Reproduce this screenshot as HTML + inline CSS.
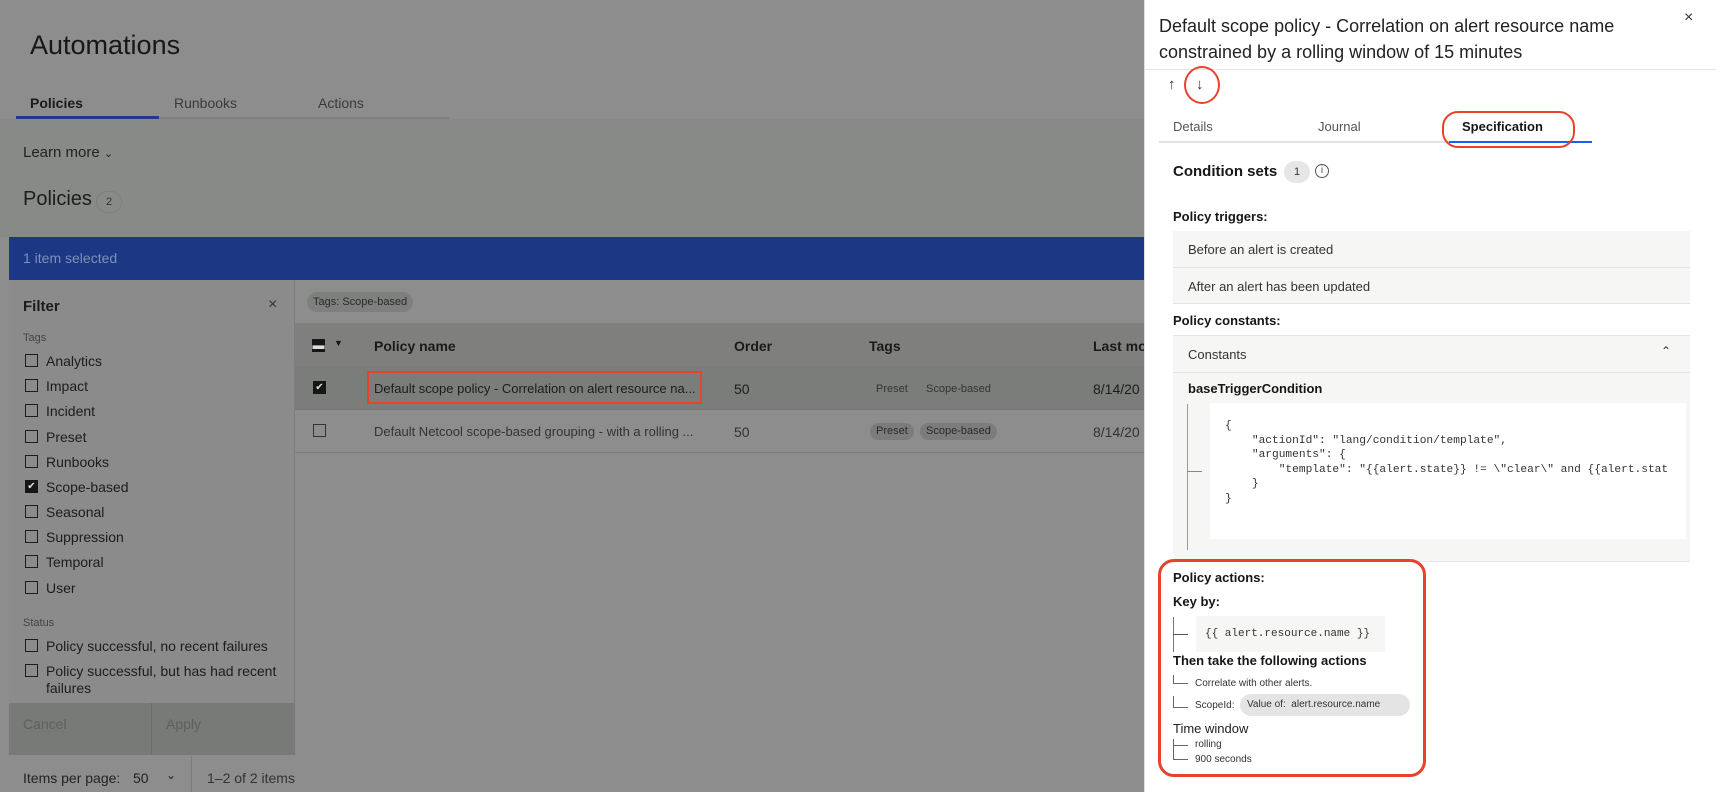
<!DOCTYPE html>
<html><head><meta charset="utf-8"><style>
*{margin:0;padding:0;box-sizing:border-box}
body{width:1716px;height:792px;overflow:hidden;position:relative;background:#8d8d8d;font-family:"Liberation Sans",sans-serif;color:#161616}
.a{position:absolute;white-space:nowrap}
.cb{position:absolute;width:13px;height:13px;border:1px solid #1c1c1c}
.cbk{position:absolute;width:13px;height:13px;background:#161616;color:#ddd;font-size:10px;line-height:13px;text-align:center}
.lbl{font-size:14px;color:#1c1c1c}
.chip{position:absolute;height:17px;border-radius:9px;background:#7b7c7b;font-size:11px;line-height:17px;padding:0 6px;color:#2a2a2a}
.d{color:#161616}
.box{position:absolute;background:#f6f7f5}
.mono{font-family:"Liberation Mono",monospace}
</style></head><body>
<div class="a" style="left:30px;top:30px;font-size:27px;color:#171717">Automations</div>
<div class="a" style="left:30px;top:95px;font-size:14px;font-weight:bold;color:#1a1a1a">Policies</div>
<div class="a" style="left:174px;top:95px;font-size:14px;color:#3a3a3a">Runbooks</div>
<div class="a" style="left:318px;top:95px;font-size:14px;color:#3a3a3a">Actions</div>
<div class="a" style="left:16px;top:117px;width:433px;height:2px;background:#7e807e"></div>
<div class="a" style="left:16px;top:116px;width:143px;height:3px;background:#1f3a8a"></div>
<div class="a" style="left:0;top:119px;width:1144px;height:118px;background:#888a87"></div>
<div class="a" style="left:23px;top:144px;font-size:15px;color:#222">Learn more <span style="font-size:11px">&#8964;</span></div>
<div class="a" style="left:23px;top:188px;font-size:20px;color:#1d1d1d">Policies</div>
<div class="a" style="left:96px;top:191px;width:26px;height:22px;border-radius:11px;border:1px solid #7d7f7d;font-size:11px;line-height:20px;text-align:center;color:#333">2</div>
<div class="a" style="left:9px;top:237px;width:1135px;height:43px;background:#1c3784;color:#7f8fb5;font-size:14px;line-height:43px;padding-left:14px">1 item selected</div>
<div class="a" style="left:9px;top:280px;width:286px;height:423px;background:#8b8b8b;border-right:1px solid #7e7e7e"></div>
<div class="a" style="left:23px;top:298px;font-size:15px;font-weight:bold;color:#1c1c1c">Filter</div>
<div class="a" style="left:268px;top:296px;font-size:16px;color:#333">×</div>
<div class="a" style="left:23px;top:332px;font-size:11px;color:#444">Tags</div>
<div class="cb" style="left:25px;top:354px"></div><div class="a lbl" style="left:46px;top:353px">Analytics</div>
<div class="cb" style="left:25px;top:379px"></div><div class="a lbl" style="left:46px;top:378px">Impact</div>
<div class="cb" style="left:25px;top:404px"></div><div class="a lbl" style="left:46px;top:403px">Incident</div>
<div class="cb" style="left:25px;top:430px"></div><div class="a lbl" style="left:46px;top:429px">Preset</div>
<div class="cb" style="left:25px;top:455px"></div><div class="a lbl" style="left:46px;top:454px">Runbooks</div>
<div class="cbk" style="left:25px;top:480px">✔</div><div class="a lbl" style="left:46px;top:479px">Scope-based</div>
<div class="cb" style="left:25px;top:505px"></div><div class="a lbl" style="left:46px;top:504px">Seasonal</div>
<div class="cb" style="left:25px;top:530px"></div><div class="a lbl" style="left:46px;top:529px">Suppression</div>
<div class="cb" style="left:25px;top:555px"></div><div class="a lbl" style="left:46px;top:554px">Temporal</div>
<div class="cb" style="left:25px;top:581px"></div><div class="a lbl" style="left:46px;top:580px">User</div>
<div class="a" style="left:23px;top:617px;font-size:11px;color:#444">Status</div>
<div class="cb" style="left:25px;top:639px"></div><div class="a lbl" style="left:46px;top:638px">Policy successful, no recent failures</div>
<div class="cb" style="left:25px;top:664px"></div><div class="a lbl" style="left:46px;top:663px;line-height:17px">Policy successful, but has had recent<br>failures</div>
<div class="a" style="left:9px;top:703px;width:286px;height:52px;background:#777a77"></div>
<div class="a" style="left:151px;top:703px;width:1px;height:52px;background:#6c6e6c"></div>
<div class="a" style="left:23px;top:716px;font-size:14px;color:#5e605e">Cancel</div>
<div class="a" style="left:166px;top:716px;font-size:14px;color:#5e605e">Apply</div>
<div class="a" style="left:23px;top:770px;font-size:14px;color:#222">Items per page:</div>
<div class="a" style="left:133px;top:770px;font-size:14px;color:#222">50</div>
<div class="a" style="left:166px;top:768px;font-size:12px;color:#222">&#8964;</div>
<div class="a" style="left:191px;top:756px;width:1px;height:36px;background:#7c7c7c"></div>
<div class="a" style="left:207px;top:770px;font-size:14px;color:#333">1–2 of 2 items</div>
<div class="chip" style="left:307px;top:292px;height:20px;line-height:20px;font-size:11px;background:#7e807e;border-radius:10px">Tags: Scope-based</div>
<div class="a" style="left:295px;top:323px;width:849px;height:44px;background:#7f807e"></div>
<div class="a" style="left:295px;top:367px;width:849px;height:43px;background:#7b7d7a;border-bottom:1px solid #747674"></div>
<div class="a" style="left:295px;top:410px;width:849px;height:43px;border-bottom:1px solid #7c7c7c"></div>
<div class="cbk" style="left:312px;top:339px;font-size:12px;line-height:12px">&#9644;</div>
<div class="a" style="left:334px;top:338px;font-size:9px">▼</div>
<div class="a" style="left:374px;top:338px;font-size:14px;font-weight:bold;color:#1a1a1a">Policy name</div>
<div class="a" style="left:734px;top:338px;font-size:14px;font-weight:bold;color:#1a1a1a">Order</div>
<div class="a" style="left:869px;top:338px;font-size:14px;font-weight:bold;color:#1a1a1a">Tags</div>
<div class="a" style="left:1093px;top:338px;font-size:14px;font-weight:bold;color:#1a1a1a">Last mod</div>
<div class="cbk" style="left:313px;top:381px">✔</div>
<div class="a" style="left:367px;top:371px;width:335px;height:33px;border:2px solid #e8412c"></div>
<div class="a" style="left:374px;top:381px;font-size:13px;color:#1c1c1c">Default scope policy - Correlation on alert resource na...</div>
<div class="a" style="left:734px;top:381px;font-size:14px;color:#1c1c1c">50</div>
<div class="a" style="left:876px;top:383px;font-size:11px;color:#333">Preset</div>
<div class="a" style="left:926px;top:383px;font-size:11px;color:#333">Scope-based</div>
<div class="a" style="left:1093px;top:381px;font-size:14px;color:#1c1c1c">8/14/20</div>
<div class="cb" style="left:313px;top:424px;border-color:#333"></div>
<div class="a" style="left:374px;top:424px;font-size:13px;color:#333">Default Netcool scope-based grouping - with a rolling ...</div>
<div class="a" style="left:734px;top:424px;font-size:14px;color:#333">50</div>
<div class="chip" style="left:870px;top:423px">Preset</div>
<div class="chip" style="left:920px;top:423px">Scope-based</div>
<div class="a" style="left:1093px;top:424px;font-size:14px;color:#333">8/14/20</div>
<div class="a" style="left:1144px;top:0;width:572px;height:792px;background:#fff;border-left:1px solid #e0e0e0"></div>
<div class="a d" style="left:1159px;top:13px;font-size:18px;line-height:26px;color:#222">Default scope policy - Correlation on alert resource name<br>constrained by a rolling window of 15 minutes</div>
<div class="a" style="left:1684px;top:9px;font-size:16px;color:#333">×</div>
<div class="a" style="left:1144px;top:69px;width:572px;height:1px;background:#e4e4e4"></div>
<div class="a" style="left:1168px;top:76px;font-size:15px;color:#333">↑</div>
<div class="a" style="left:1196px;top:76px;font-size:15px;color:#333">↓</div>
<div class="a" style="left:1184px;top:66px;width:36px;height:38px;border:2px solid #e8412c;border-radius:50%"></div>
<div class="a" style="left:1173px;top:119px;font-size:13px;color:#555">Details</div>
<div class="a" style="left:1318px;top:119px;font-size:13px;color:#555">Journal</div>
<div class="a" style="left:1462px;top:119px;font-size:13px;font-weight:bold;color:#161616">Specification</div>
<div class="a" style="left:1159px;top:141px;width:433px;height:2px;background:#e2e2e2"></div>
<div class="a" style="left:1449px;top:141px;width:143px;height:2px;background:#0f62fe"></div>
<div class="a" style="left:1442px;top:111px;width:133px;height:37px;border:2px solid #e8412c;border-radius:16px"></div>
<div class="a" style="left:1173px;top:163px;font-size:15px;font-weight:bold;color:#161616">Condition sets</div>
<div class="a" style="left:1284px;top:161px;width:26px;height:22px;border-radius:11px;background:#e6e6e6;font-size:11px;line-height:22px;text-align:center;color:#333">1</div>
<div class="a" style="left:1315px;top:164px;width:14px;height:14px;border:1px solid #555;border-radius:50%;font-size:10px;line-height:12px;text-align:center;color:#555">i</div>
<div class="a" style="left:1173px;top:209px;font-size:13px;font-weight:bold;color:#161616">Policy triggers:</div>
<div class="box" style="left:1173px;top:231px;width:517px;height:73px"></div>
<div class="a" style="left:1173px;top:267px;width:517px;height:1px;background:#e4e4e4"></div>
<div class="a" style="left:1173px;top:303px;width:517px;height:1px;background:#e4e4e4"></div>
<div class="a" style="left:1188px;top:242px;font-size:13px;color:#333">Before an alert is created</div>
<div class="a" style="left:1188px;top:279px;font-size:13px;color:#333">After an alert has been updated</div>
<div class="a" style="left:1173px;top:313px;font-size:13px;font-weight:bold;color:#161616">Policy constants:</div>
<div class="box" style="left:1173px;top:335px;width:517px;height:227px;border-top:1px solid #e4e4e4;border-bottom:1px solid #e8e8e8"></div>
<div class="a" style="left:1173px;top:372px;width:517px;height:1px;background:#e4e4e4"></div>
<div class="a" style="left:1188px;top:347px;font-size:13px;color:#333">Constants</div>
<div class="a" style="left:1661px;top:344px;font-size:12px;color:#333">&#8963;</div>
<div class="a" style="left:1188px;top:381px;font-size:13px;font-weight:bold;color:#161616">baseTriggerCondition</div>
<div class="a" style="left:1187px;top:404px;width:1px;height:146px;background:#999"></div>
<div class="a" style="left:1187px;top:471px;width:15px;height:1px;background:#888"></div>
<div class="a" style="left:1210px;top:403px;width:476px;height:136px;background:#fff"></div>
<pre class="a mono" style="left:1225px;top:419px;font-size:11.2px;line-height:14.5px;color:#333;width:455px;overflow:hidden;white-space:pre">{
    "actionId": "lang/condition/template",
    "arguments": {
        "template": "{{alert.state}} != \"clear\" and {{alert.stat
    }
}</pre>
<div class="a" style="left:1158px;top:559px;width:268px;height:218px;border:3px solid #e8412c;border-radius:16px"></div>
<div class="a" style="left:1173px;top:570px;font-size:13px;font-weight:bold;color:#161616">Policy actions:</div>
<div class="a" style="left:1173px;top:594px;font-size:13px;font-weight:bold;color:#161616">Key by:</div>
<div class="a" style="left:1173px;top:617px;width:1px;height:35px;background:#777"></div>
<div class="a" style="left:1173px;top:634px;width:15px;height:1px;background:#555"></div>
<div class="a" style="left:1196px;top:616px;width:189px;height:36px;background:#f6f7f5"></div>
<div class="a mono" style="left:1205px;top:628px;font-size:11px;color:#333">{{ alert.resource.name }}</div>
<div class="a" style="left:1173px;top:653px;font-size:13px;font-weight:bold;color:#161616">Then take the following actions</div>
<div class="a" style="left:1173px;top:675px;width:15px;height:9px;border-left:1px solid #666;border-bottom:1px solid #666"></div>
<div class="a" style="left:1195px;top:678px;font-size:10px;color:#333">Correlate with other alerts.</div>
<div class="a" style="left:1173px;top:696px;width:15px;height:12px;border-left:1px solid #666;border-bottom:1px solid #666"></div>
<div class="a" style="left:1195px;top:700px;font-size:10px;color:#333">ScopeId:</div>
<div class="a" style="left:1240px;top:694px;width:170px;height:22px;border-radius:11px;background:#e4e4e4;font-size:10px;line-height:22px;padding-left:7px;color:#333">Value of:&nbsp; alert.resource.name</div>
<div class="a" style="left:1173px;top:721px;font-size:13px;color:#222">Time window</div>
<div class="a" style="left:1173px;top:739px;width:15px;height:7px;border-left:1px solid #666;border-bottom:1px solid #666"></div>
<div class="a" style="left:1173px;top:746px;width:15px;height:14px;border-left:1px solid #666;border-bottom:1px solid #666"></div>
<div class="a" style="left:1195px;top:739px;font-size:10px;color:#333">rolling</div>
<div class="a" style="left:1195px;top:754px;font-size:10px;color:#333">900 seconds</div>
</body></html>
